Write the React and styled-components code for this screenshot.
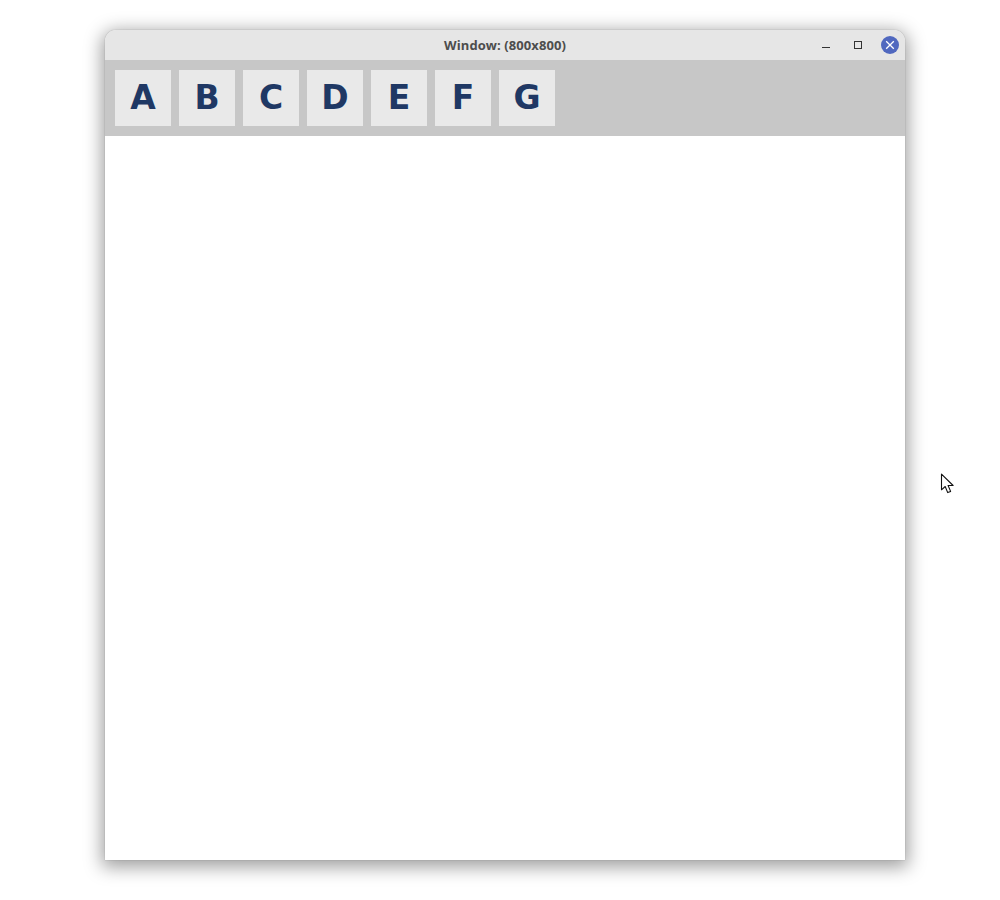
import React from "react";
import styled, { createGlobalStyle } from "styled-components";

const Global = createGlobalStyle`
  html, body { margin: 0; padding: 0; background: #fff; }
  body { width: 1000px; height: 900px; overflow: hidden; font-family: "Open Sans", "Noto Sans", sans-serif; }
`;

const Desktop = styled.div`
  position: relative;
  width: 1000px;
  height: 900px;
  box-sizing: border-box;
  padding: 30px 95px 40px 105px;
  background: #fff;
`;

const Window = styled.div`
  width: 800px;
  height: 830px;
  display: flex;
  flex-direction: column;
  border-radius: 11px 11px 0 0;
  background: #fff;
  box-shadow: 0 0 1px 0 rgba(0,0,0,.45), 0 4px 18px 3px rgba(0,0,0,.38);
  overflow: hidden;
`;

const TitleBar = styled.div`
  position: relative;
  height: 30px;
  flex: none;
  display: flex;
  align-items: center;
  justify-content: center;
  background: #e6e6e6;
`;

const Title = styled.span`
  font-size: 13px;
  font-weight: 700;
  color: #4d4d4d;
  letter-spacing: 0.08px;
`;

const Controls = styled.div`
  position: absolute;
  right: 6px;
  top: 6px;
  display: flex;
  align-items: center;
  gap: 14px;
`;

const Control = styled.div`
  width: 18px;
  height: 18px;
  display: flex;
  align-items: center;
  justify-content: center;
  border-radius: 50%;
  background: ${(p) => p.$bg || "transparent"};
`;

const Toolbar = styled.div`
  height: 76px;
  flex: none;
  box-sizing: border-box;
  padding: 10px;
  display: flex;
  gap: 8px;
  background: #c7c7c7;
`;

const ToolButton = styled.div`
  width: 56px;
  height: 56px;
  box-sizing: border-box;
  padding-bottom: 1px;
  display: flex;
  align-items: center;
  justify-content: center;
  background: #e9e9e9;
  color: #1f3864;
  font-family: "DejaVu Sans", sans-serif;
  font-size: 33px;
  font-weight: 700;
  line-height: 1;
`;

const Content = styled.div`
  flex: 1;
  background: #fff;
`;

const Cursor = styled.svg`
  position: absolute;
  left: 940px;
  top: 473px;
`;

export default function App() {
  return (
    <>
      <Global />
      <Desktop>
        <Window>
          <TitleBar>
            <Title>Window: (800x800)</Title>
            <Controls>
              <Control>
                <svg width="18" height="18" viewBox="0 0 18 18">
                  <path d="M5 11.5h8" stroke="#333" strokeWidth="1" fill="none" />
                </svg>
              </Control>
              <Control>
                <svg width="18" height="18" viewBox="0 0 18 18">
                  <rect x="5.5" y="5.5" width="7" height="7" stroke="#333" strokeWidth="1" fill="none" />
                </svg>
              </Control>
              <Control $bg="#5068bf">
                <svg width="18" height="18" viewBox="0 0 18 18">
                  <path d="M5.2 5.2l7.6 7.6M12.8 5.2l-7.6 7.6" stroke="#fff" strokeWidth="1.3" fill="none" />
                </svg>
              </Control>
            </Controls>
          </TitleBar>
          <Toolbar>
            {["A", "B", "C", "D", "E", "F", "G"].map((l) => (
              <ToolButton key={l}>{l}</ToolButton>
            ))}
          </Toolbar>
          <Content />
        </Window>
        <Cursor width="14" height="22" viewBox="0 0 14 22">
          <path d="M1.5 1.2v15.6l3.7-3.3 2.5 6.1 2.9-1.2-2.5-5.9h5z" fill="#fff" stroke="#111" strokeWidth="1.1" strokeLinejoin="round" />
        </Cursor>
      </Desktop>
    </>
  );
}
